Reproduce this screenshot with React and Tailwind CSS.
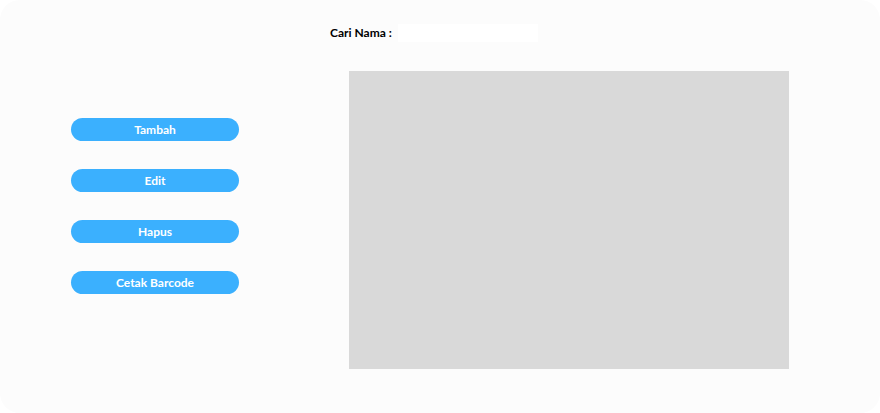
export default function App() {
  const buttons = ["Tambah", "Edit", "Hapus", "Cetak Barcode"];
  return (
    <div className="w-[880px] h-[413px] bg-white">
      <div
        className="w-full h-full rounded-[20px] bg-[#fcfcfc]"
        style={{ fontFamily: "Lato, 'Noto Sans', sans-serif" }}
      >
        <div className="flex items-center pt-6 pl-[330px]">
          <span className="text-[12px] leading-[18px] font-bold text-black w-[68px]">Cari Nama :</span>
          <input className="w-[140px] h-[18px] bg-white outline-none" />
        </div>
        <div className="flex mt-[29px]">
          <div className="flex flex-col gap-7 pl-[71px] pt-[47px] w-[349px]">
            {buttons.map((b) => (
              <button
                key={b}
                className="w-[168px] h-[23px] rounded-full bg-[#3bb0fe] text-white text-[12px] font-bold"
              >
                {b}
              </button>
            ))}
          </div>
          <div className="w-[440px] h-[298px] bg-[#d9d9d9]" />
        </div>
      </div>
    </div>
  );
}
